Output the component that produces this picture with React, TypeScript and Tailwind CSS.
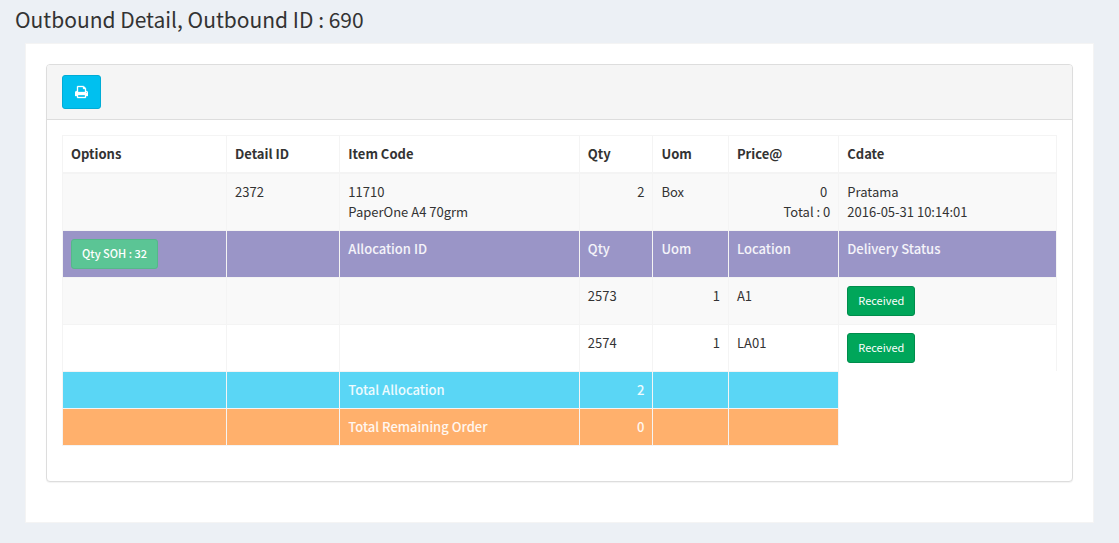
import type { ReactNode } from "react";

const cell = "border border-[#f4f4f4] p-2 align-top";

function Received() {
  return (
    <button type="button" className="block h-[30px] rounded-[3px] border border-[#008d4c] bg-[#00a65a] px-[10px] pb-[2px] text-[11px] leading-[18px] text-white">
      Received
    </button>
  );
}

function TotalRow({ label, value, tone }: { label: ReactNode; value: number; tone: string }) {
  return (
    <tr className="font-medium text-white/90">
      <td className={`${cell} ${tone}`} />
      <td className={`${cell} ${tone}`} />
      <td className={`${cell} ${tone}`}>{label}</td>
      <td className={`${cell} ${tone} text-right`}>{value}</td>
      <td className={`${cell} ${tone}`} />
      <td className={`${cell} ${tone}`} />
    </tr>
  );
}

const allocations = [
  { id: 2573, qty: 1, location: "A1" },
  { id: 2574, qty: 1, location: "LA01" },
];

export default function App() {
  const purple = "bg-[#9a95c7]";
  return (
    <main className="min-h-screen bg-[#ecf0f5] pb-5 font-['Noto_Sans_CJK_SC','Open_Sans',sans-serif] text-[13px] leading-5 text-[#333]">
      <h1 className="px-[15px] pt-[6px] pb-[11px] text-[21px] leading-[26px]">Outbound Detail, Outbound ID : 690</h1>
      <section className="mx-[25px] border border-[#f4f4f4] bg-white px-5 pt-5 pb-10">
        <div className="rounded border border-[#ddd] bg-white shadow-[0_1px_1px_rgba(0,0,0,0.05)]">
          <header className="rounded-t-[3px] border-b border-[#ddd] bg-[#f5f5f5] px-[15px] py-[10px]">
            <button type="button" aria-label="Print" className="flex h-[34px] w-[39px] items-center justify-center rounded-[3px] border border-[#00acd6] bg-[#00c0ef] text-white">
              <svg width="13" height="14" viewBox="0 0 1664 1792" fill="currentColor" stroke="currentColor" strokeWidth="40" aria-hidden="true">
                <path d="M384 1536h896v-256H384v256zm0-640h896V512h-160q-40 0-68-28t-28-68V256H384v640zm1152 64q0-26-19-45t-45-19-45 19-19 45 19 45 45 19 45-19 19-45zm128 0v416q0 13-9.500 22.500t-22.500 9.500h-224v160q0 40-28 68t-68 28H352q-40 0-68-28t-28-68v-160H32q-13 0-22.500-9.500T0 1376V960q0-79 56.500-135.500T192 768h64V224q0-40 28-68t68-28h672q40 0 88 20t76 48l152 152q28 28 48 76t20 88v256h64q79 0 135.500 56.500T1664 960z" />
              </svg>
            </button>
          </header>
          <div className="px-[15px] pt-[15px] pb-[35px]">
            <table className="w-full table-fixed border-collapse text-left">
              <colgroup>
                <col className="w-[16.5%]" />
                <col className="w-[11.4%]" />
                <col className="w-[24.1%]" />
                <col className="w-[7.4%]" />
                <col className="w-[7.6%]" />
                <col className="w-[11.1%]" />
                <col className="w-[21.9%]" />
              </colgroup>
              <thead>
                <tr className="font-bold">
                  {["Options", "Detail ID", "Item Code", "Qty", "Uom", "Price@", "Cdate"].map((name) => (
                    <th key={name} scope="col" className="border border-b-2 border-[#f4f4f4] p-2">
                      {name}
                    </th>
                  ))}
                </tr>
              </thead>
              <tbody>
                <tr className="bg-[#f9f9f9]">
                  <td className={cell} />
                  <td className={cell}>2372</td>
                  <td className={cell}>
                    11710
                    <br />
                    PaperOne A4 70grm
                  </td>
                  <td className={`${cell} text-right`}>2</td>
                  <td className={cell}>Box</td>
                  <td className={`${cell} text-right`}>
                    <span className="pr-[3px]">0</span>
                    <br />
                    Total : 0
                  </td>
                  <td className={cell}>
                    Pratama
                    <br />
                    2016-05-31 10:14:01
                  </td>
                </tr>
                <tr className="font-medium text-white/90">
                  <td className={`${cell} ${purple}`}>
                    <button type="button" className="block h-[30px] rounded-[3px] border border-[#55b889] bg-[#5bc595] px-[10px] pb-[2px] text-[11px] leading-[18px] font-medium whitespace-nowrap text-white">
                      Qty SOH : 32
                    </button>
                  </td>
                  <td className={`${cell} ${purple}`} />
                  <td className={`${cell} ${purple}`}>Allocation ID</td>
                  <td className={`${cell} ${purple}`}>Qty</td>
                  <td className={`${cell} ${purple}`}>Uom</td>
                  <td className={`${cell} ${purple}`}>Location</td>
                  <td className={`${cell} ${purple}`}>Delivery Status</td>
                </tr>
                {allocations.map(({ id, qty, location }, index) => (
                  <tr key={id} className="odd:bg-[#f9f9f9]">
                    <td className={cell} />
                    <td className={cell} />
                    <td className={cell} />
                    <td className={cell}>{id}</td>
                    <td className={`${cell} text-right`}>{qty}</td>
                    <td className={cell}>{location}</td>
                    <td className={index === allocations.length - 1 ? "border border-b-0 border-[#f4f4f4] p-2 align-top" : cell}>
                      <Received />
                    </td>
                  </tr>
                ))}
                <TotalRow label="Total Allocation" value={2} tone="bg-[#5ad6f5]" />
                <TotalRow label="Total Remaining Order" value={0} tone="bg-[#ffb06c]" />
              </tbody>
            </table>
          </div>
        </div>
      </section>
    </main>
  );
}
